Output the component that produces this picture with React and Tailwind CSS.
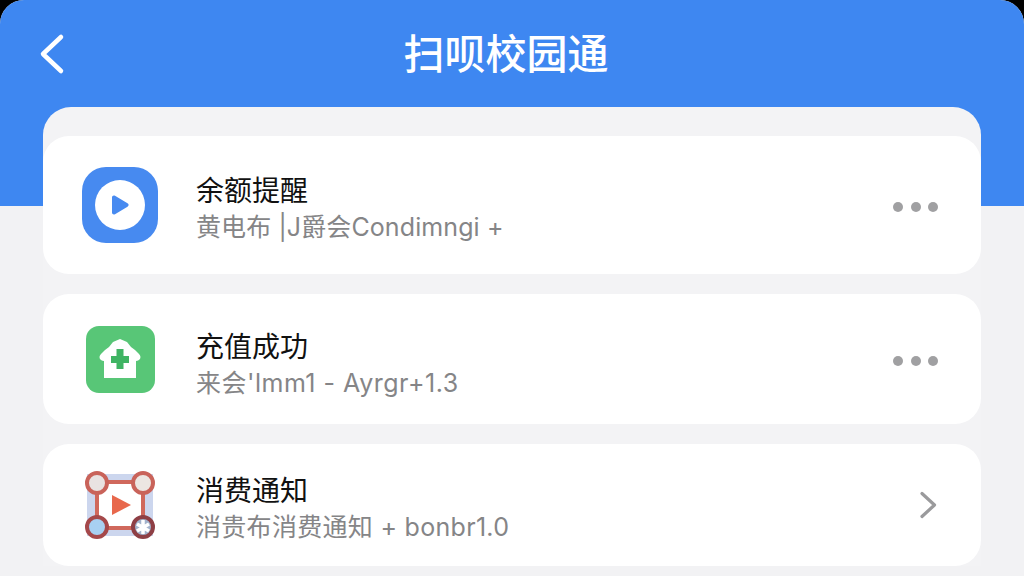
const FONT = 'font-["Inter","Noto_Sans_CJK_SC",sans-serif]';

function BalanceIcon() {
  return (
    <div className="w-[76px] h-[76px] rounded-[24px] bg-[#478af0] flex items-center justify-center">
      <div className="w-[50px] h-[50px] rounded-full bg-white flex items-center justify-center">
        <svg width="22" height="24" viewBox="0 0 22 24">
          <path d="M3 4.5 C3 2.8 4.6 2 6 2.8 L18.5 10.3 C20 11.2 20 12.8 18.5 13.7 L6 21.2 C4.6 22 3 21.2 3 19.5 Z" fill="#478af0" />
        </svg>
      </div>
    </div>
  );
}

function RechargeIcon() {
  return (
    <div className="w-[69px] h-[67px] rounded-[13px] bg-[#58c677] flex items-center justify-center">
      <svg width="46" height="46" viewBox="0 0 46 46">
        <path d="M23 3 L30 6 L34 11 L38 14 L42 18 C45 21 43 25 39 25 V42 H7 V25 C3 25 1 21 4 18 L8 14 L12 11 L16 6 Z" fill="#fff" />
        <path d="M19.5 13 H26.5 V20 H32 V27 H26.5 V33 H19.5 V27 H14 V20 H19.5 Z" fill="#3fb463" />
      </svg>
    </div>
  );
}

function NotifyIcon() {
  return (
    <svg width="72" height="68" viewBox="0 0 72 68">
      <rect x="3" y="3" width="66" height="62" fill="#ccd6ee" />
      <rect x="13" y="11" width="46" height="46" fill="#fff" stroke="#d0685c" strokeWidth="4" />
      <circle cx="13" cy="12" r="10" fill="#e9e3e2" stroke="#c9635a" strokeWidth="4" />
      <circle cx="59" cy="12" r="10" fill="#ece6e2" stroke="#c9635a" strokeWidth="4" />
      <circle cx="13" cy="56" r="10" fill="#a8d0f2" stroke="#a5484a" strokeWidth="4" />
      <circle cx="59" cy="56" r="10" fill="#a3b3cc" stroke="#8e3f45" strokeWidth="4" />
      <path d="M28 24 L47 34 L28 44 Z" fill="#e8684c" />
      <path d="M59 49 V63 M53 53 L65 60 M65 53 L53 60" stroke="#fff" strokeWidth="3.5" />
    </svg>
  );
}

function Dots() {
  return (
    <div className="flex items-center gap-[7.5px] mt-[4px]">
      <span className="w-[10px] h-[10px] rounded-full bg-[#a0a0a2]" />
      <span className="w-[10px] h-[10px] rounded-full bg-[#a0a0a2]" />
      <span className="w-[10px] h-[10px] rounded-full bg-[#a0a0a2]" />
    </div>
  );
}

function Row({ height, icon, title, sub, subClass, action, top }) {
  return (
    <div className={`bg-white rounded-[26px] flex items-center pl-[39px] pr-[43px] ${height}`}>
      <div className="flex items-center justify-center shrink-0 w-[76px]">{icon}</div>
      <div className={`ml-[38px] flex-1 ${top}`}>
        <div className="text-[28px] leading-[34px] text-[#111111]">{title}</div>
        <div className={`text-[25px] leading-[32px] text-[#858587] mt-[3px] whitespace-nowrap ${subClass}`}>{sub}</div>
      </div>
      {action}
    </div>
  );
}

export default function App() {
  return (
    <div className={`h-[576px] w-[1024px] overflow-hidden bg-black ${FONT}`}>
      <div className="h-full rounded-t-[24px] overflow-hidden bg-[#f2f2f4]">
        <header className="h-[206px] bg-[#3e87f1] relative">
          <div className="h-[107px] flex items-center justify-center pr-[12px] pt-[2px]">
            <h1 className="text-[41px] font-medium text-white">扫呗校园通</h1>
          </div>
          <svg className="absolute left-[38px] top-[33px]" width="28" height="42" viewBox="0 0 28 42" fill="none">
            <path d="M23 4 L5 21 L23 38" stroke="#fff" strokeWidth="4.5" strokeLinecap="round" strokeLinejoin="round" />
          </svg>
        </header>

        <main className="relative mx-[43px] -mt-[99px] bg-[#f3f3f5] rounded-t-[28px] pt-[29px] flex flex-col gap-[20px]">
          <Row
            height="h-[138px]"
            top="mt-[6px]"
            icon={<BalanceIcon />}
            title="余额提醒"
            sub="黄电布 |J爵会Condimngi +"
            subClass="tracking-[0.1px]"
            action={<Dots />}
          />
          <Row
            height="h-[130px]"
            top="mt-[10px]"
            icon={<RechargeIcon />}
            title="充值成功"
            sub="来会'lmm1 - Ayrgr+1.3"
            subClass="tracking-[0.5px]"
            action={<Dots />}
          />
          <Row
            height="h-[122px]"
            top="mt-[7px]"
            icon={<NotifyIcon />}
            title="消费通知"
            sub="消贵布消费通知 + bonbr1.0"
            subClass="tracking-[0.3px]"
            action={
              <svg className="mr-[-1px]" width="20" height="30" viewBox="0 0 20 30" fill="none">
                <path d="M3 3.5 L15.5 15 L3 26.5" stroke="#9a9a9c" strokeWidth="3.2" strokeLinecap="round" strokeLinejoin="round" />
              </svg>
            }
          />
        </main>
      </div>
    </div>
  );
}
